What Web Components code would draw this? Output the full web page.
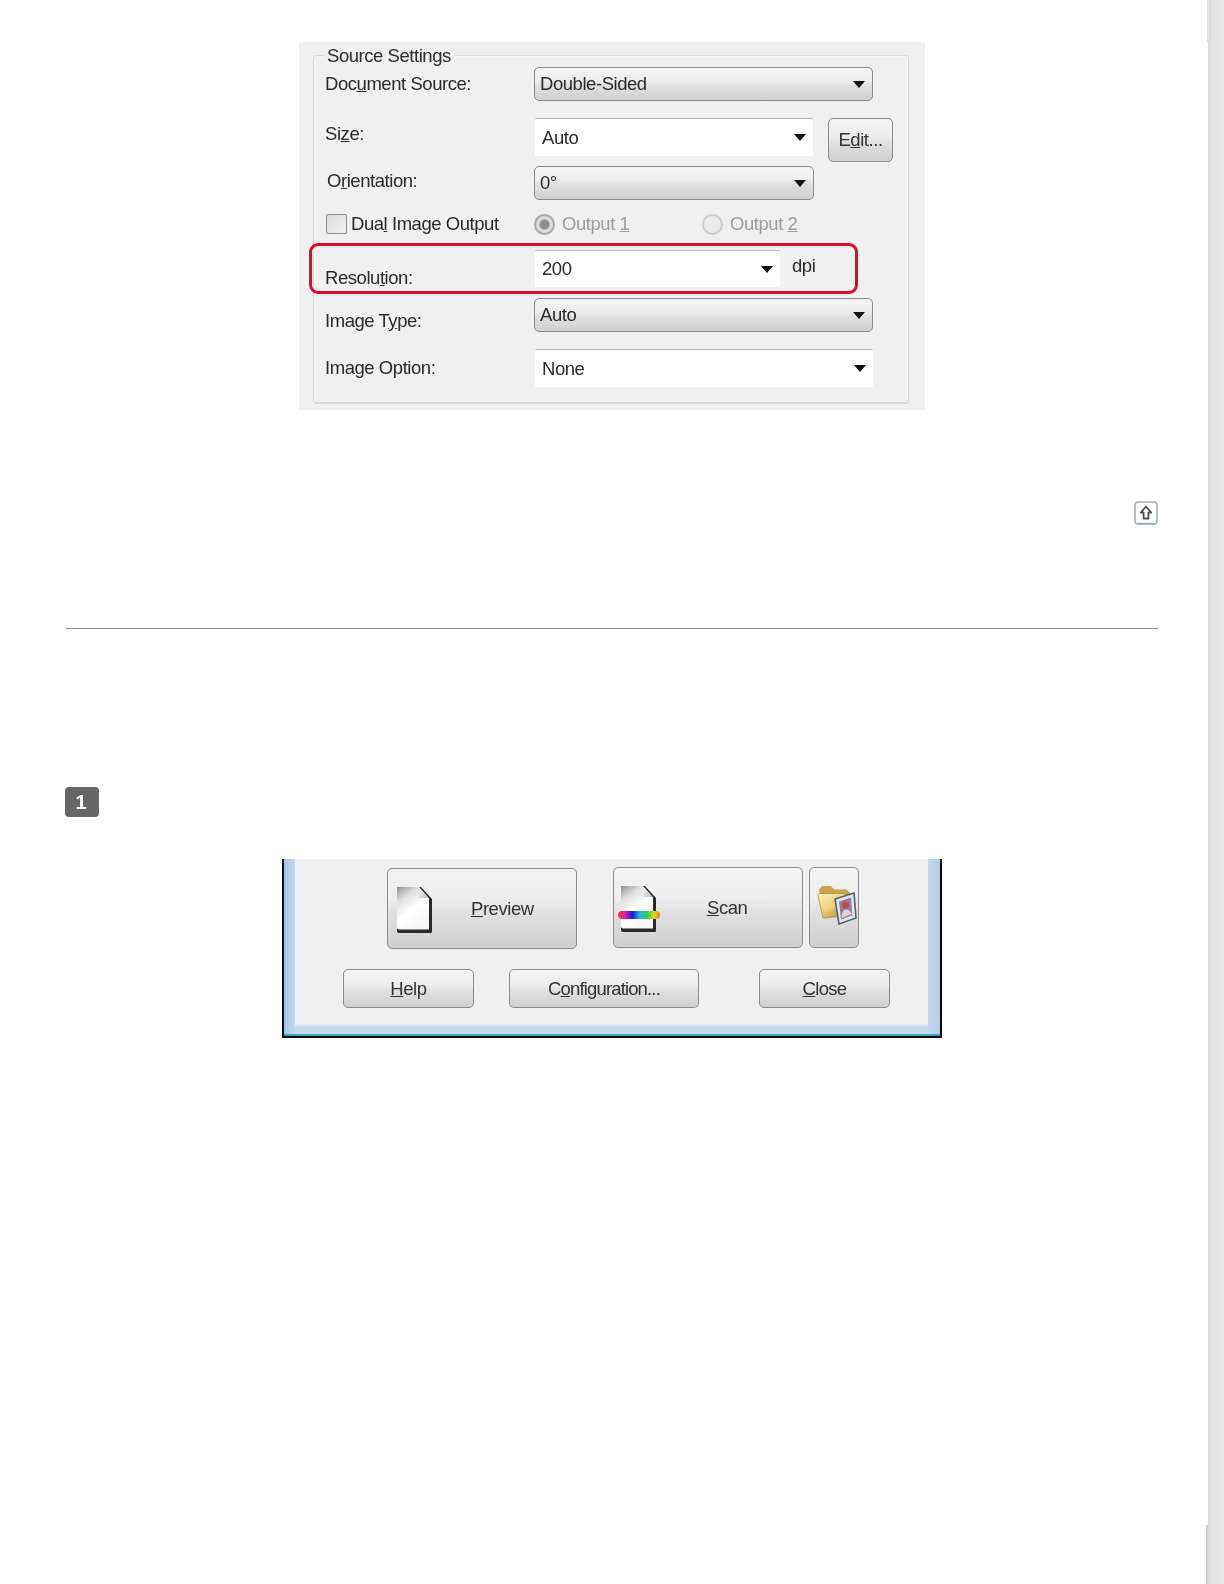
<!DOCTYPE html>
<html>
<head>
<meta charset="utf-8">
<title>Scan settings</title>
<style>
html, body { margin: 0; background: #fff; }
body { font-family: "Liberation Sans", Arial, sans-serif; color: #2a2a2a; }
u { text-underline-offset: 2px; text-decoration-thickness: 1px; }
</style>
</head>
<body>
<scan-page></scan-page>

<script>
const define = (tag, html) => {
  const template = document.createElement('template')
  template.innerHTML = html
  customElements.define(tag, class extends HTMLElement {
    constructor () {
      super()
      this.attachShadow({ mode: 'open' })
      this.shadowRoot.appendChild(template.content.cloneNode(true))
    }
  })
}

const arrow = '<svg width="12" height="7" viewBox="0 0 12 7"><path d="M0 0h12L6 7z" fill="#111"/></svg>'

const buttonFace = `
  background: linear-gradient(#f3f3f3 0, #eeeeee 38%, #e0e0e0 56%, #d0d0d0 100%);
  border: 1.5px solid #8a8a8a;
  border-radius: 5px;
  box-sizing: border-box;
`

define('ui-select', `
<style>
:host { display: flex; align-items: center; box-sizing: border-box; height: 34px; padding: 0 7px 0 5px; ${buttonFace} }
:host([edit]) { background: #fff; border: 0; border-top: 1px solid #b5b5b5; border-radius: 2px; padding: 0 7px 0 7px; }
.text { flex: 1; }
svg { display: block; flex: none; }
</style>
<span class="text"><slot></slot></span>${arrow}
`)

define('ui-button', `
<style>
:host { display: flex; align-items: center; justify-content: center; color: #333; ${buttonFace} }
</style>
<slot></slot>
`)

define('ui-check', `
<style>
:host { display: flex; align-items: center; gap: 4px; padding-left: 1px; }
i { display: block; box-sizing: border-box; width: 21px; height: 20px; border: 1.5px solid #8c8c8c; border-radius: 2px; background: linear-gradient(135deg, #d8d8d8, #f4f4f4); }
</style>
<i></i><span><slot></slot></span>
`)

define('ui-radio', `
<style>
:host { display: flex; align-items: center; gap: 7px; color: #9c9c9c; }
i { display: block; box-sizing: border-box; width: 21px; height: 21px; border: 2px solid #cdcdcd; border-radius: 50%; background: #ebebeb; }
:host([checked]) i { background: radial-gradient(circle, #8d8d8d 0 4px, #dcdcdc 6px); border-color: #a8a8a8; }
</style>
<i></i><span><slot></slot></span>
`)

define('source-settings', `
<style>
:host { display: block; box-sizing: border-box; width: 626px; height: 368px; padding: 13px 16px 6px 14px; background: #f0f0f0; filter: blur(.5px); }
.group { position: relative; box-sizing: border-box; height: 100%; padding: 11px 0 0 11px; border: 1px solid #dbdbdb; border-bottom-width: 2px; border-radius: 4px; box-shadow: inset 0 0 0 1px #f6f6f6; }
.legend { position: absolute; left: 10px; top: -12px; padding: 0 3px; background: #f0f0f0; line-height: 24px; }
.row { display: flex; align-items: center; }
.label { flex: none; width: 209px; box-sizing: border-box; }
.r2 { margin-top: 17px; height: 44px; align-items: flex-start; }
.r3 { margin-top: 4px; }
.r4 { margin-top: 14px; height: 20px; }
.r5 { margin-top: 16px; height: 37px; align-items: flex-start; }
.r6 { margin-top: 11px; }
.r7 { margin-top: 17px; }
.wide { width: 339px; }
.narrow { width: 280px; }
ui-select[edit] { height: 38px; }
.r2 ui-select { width: 278px; margin-left: 1px; }
.r5 ui-select { width: 245px; margin-left: 1px; height: 37px; }
.r7 ui-select { width: 338px; margin-left: 1px; }
.edit { width: 65px; height: 44px; margin-left: 15px; }
.dpi { margin: 5px 0 0 12px; }
.r4 ui-radio:first-of-type { width: 168px; }
.mark { position: absolute; left: -5px; top: 187px; width: 549px; height: 51px; box-sizing: border-box; border: 3px solid #e1092c; border-radius: 9px; }
</style>
<div class="group">
  <div class="legend">Source Settings</div>
  <div class="row">
    <div class="label">Doc<u>u</u>ment Source:</div>
    <ui-select class="wide">Double-Sided</ui-select>
  </div>
  <div class="row r2">
    <div class="label" style="margin-top:5px">Si<u>z</u>e:</div>
    <ui-select edit>Auto</ui-select>
    <ui-button class="edit">E<u>d</u>it...</ui-button>
  </div>
  <div class="row r3">
    <div class="label" style="padding-left:2px;margin-top:-5px">O<u>r</u>ientation:</div>
    <ui-select class="narrow">0°</ui-select>
  </div>
  <div class="row r4">
    <ui-check class="label">Dua<u>l</u> Image Output</ui-check>
    <ui-radio checked>Output <u>1</u></ui-radio>
    <ui-radio>Output <u>2</u></ui-radio>
  </div>
  <div class="row r5">
    <div class="label" style="margin-top:17px">Resolu<u>t</u>ion:</div>
    <ui-select edit>200</ui-select>
    <div class="dpi">dpi</div>
  </div>
  <div class="row r6">
    <div class="label" style="margin-top:12px">Image T<u>y</u>pe:</div>
    <ui-select class="wide">Auto</ui-select>
  </div>
  <div class="row r7">
    <div class="label">Image Option:</div>
    <ui-select edit>None</ui-select>
  </div>
  <div class="mark"></div>
</div>
`)

define('top-link', `
<style>
:host { display: block; width: 24px; height: 24px; filter: blur(.5px); }
svg { display: block; }
</style>
<svg width="24" height="24" viewBox="0 0 24 24">
  <rect x="1" y="1" width="22" height="22" rx="3" fill="#fff" stroke="#a4b0ba" stroke-width="1.6"/>
  <path d="M3 22.600h18" stroke="#8fb0cc" stroke-width="1.6"/>
  <path d="M12 5.500 6.800 11.500h2.800v6h4.800v-6h2.800z" fill="#fff" stroke="#4d4d4d" stroke-width="1.8" stroke-linejoin="round"/>
</svg>
`)

define('step-badge', `
<style>
:host { display: flex; align-items: center; justify-content: center; width: 34px; height: 30px; padding-right: 2px; box-sizing: border-box; border-radius: 4px; background: #666; color: #fff; font-size: 20px; letter-spacing: 0; font-weight: 700; filter: blur(.5px); }
</style>
<slot></slot>
`)

define('doc-icon', `
<style>
:host { display: block; width: 46px; height: 50px; flex: none; margin-top: 4px; }
svg { display: block; }
:host(:not([scan])) .band { display: none; }
</style>
<svg width="46" height="50" viewBox="0 0 46 50">
  <defs>
    <linearGradient id="paper" x1="0" y1="0" x2="0.55" y2="1">
      <stop offset="0" stop-color="#8f8f8f"/><stop offset=".28" stop-color="#dedede"/><stop offset=".6" stop-color="#fff"/><stop offset="1" stop-color="#f6f6f6"/>
    </linearGradient>
    <linearGradient id="fold" x1="0" y1="0" x2="1" y2="1">
      <stop offset="0" stop-color="#fafafa"/><stop offset="1" stop-color="#bdbdbd"/>
    </linearGradient>
    <linearGradient id="rainbow">
      <stop offset="0" stop-color="#f04040"/><stop offset=".16" stop-color="#e020b0"/><stop offset=".34" stop-color="#1c20c8"/><stop offset=".52" stop-color="#20b8ea"/><stop offset=".7" stop-color="#30d040"/><stop offset=".86" stop-color="#dede20"/><stop offset="1" stop-color="#f07020"/>
    </linearGradient>
  </defs>
  <path d="M4 1h24l11 12v32.500a1.500 1.500 0 0 1-1.500 1.500H6a2 2 0 0 1-2-2z" fill="#2a2a2a"/>
  <path d="M4 1h22v11h10v31.500H6a2 2 0 0 1-2-2z" fill="url(#paper)"/>
  <path d="M26 1l10 11H26z" fill="url(#fold)"/>
  <rect class="band" x="1" y="26" width="42" height="8" rx="4" fill="url(#rainbow)"/>
</svg>
`)

define('folder-icon', `
<style>
:host { display: block; width: 40px; height: 42px; flex: none; margin: -6px 0 0 5px; }
svg { display: block; }
</style>
<svg width="40" height="42" viewBox="0 0 40 42">
  <defs>
    <linearGradient id="folder" x1="0" y1="0" x2="0.7" y2="1">
      <stop offset="0" stop-color="#fdf2bc"/><stop offset=".55" stop-color="#efd27a"/><stop offset="1" stop-color="#b8923a"/>
    </linearGradient>
  </defs>
  <path d="M2 5.500 5 2h9l3 3.500h13l4 5v14L8 32z" fill="#c8a44a"/>
  <path d="M1 11.500Q1 9.500 3 9.500h24l5 4-4 18-19 2.500H6z" fill="url(#folder)" stroke="#ad8d3c" stroke-width=".8"/>
  <path d="M18 15 37 9l2 25-17 6z" fill="#dfe7ec" stroke="#4f6270" stroke-width="1.600"/>
  <path d="M22 17.500l12-4 1.400 18L24 35.500z" fill="#8d7fa8"/>
  <circle cx="28.500" cy="21" r="3.600" fill="#c04a4a"/>
  <path d="M24.500 34c0-6 2.500-8.500 4.500-8.500s4.500 1.500 6 4.500z" fill="#e6d4ce"/>
</svg>
`)

define('scan-bar', `
<style>
:host { display: block; box-sizing: border-box; width: 660px; height: 179px; border: 2px solid #0b0b0b; border-top: 0; filter: blur(.5px); }
.frame { box-sizing: border-box; height: 100%; padding: 0 12px 10px 11px; border-bottom: 2px solid #3ba7b8; background: linear-gradient(90deg, #a9c6e6, #c4d8ee 11px, #c4d8ee calc(100% - 11px), #b4cde8); }
.inner { box-sizing: border-box; height: 100%; padding: 8px 0 0 0; background: #f0f0f0; box-shadow: 0 2px 0 #dfe9f4; }
.row { display: flex; }
.r1 { height: 82px; padding-left: 92px; }
.r2 { height: 39px; padding-left: 48px; margin-top: 20px; }
.big { width: 190px; height: 81px; justify-content: flex-start; padding-left: 5px; }
.big span { margin-top: 1px; }
.preview { margin-top: 1px; gap: 32px; }
.scan { margin-left: 36px; gap: 44px; padding-left: 3px; }
.folder { width: 50px; height: 81px; margin-left: 6px; }
.help { width: 131px; }
.config { width: 190px; margin-left: 35px; letter-spacing: -.85px; }
.close { width: 131px; margin-left: 60px; letter-spacing: -.7px; }
</style>
<div class="frame">
  <div class="inner">
    <div class="row r1">
      <ui-button class="big preview"><doc-icon></doc-icon><span><u>P</u>review</span></ui-button>
      <ui-button class="big scan"><doc-icon scan></doc-icon><span><u>S</u>can</span></ui-button>
      <ui-button class="folder"><folder-icon></folder-icon></ui-button>
    </div>
    <div class="row r2">
      <ui-button class="help"><span><u>H</u>elp</span></ui-button>
      <ui-button class="config"><span>C<u>o</u>nfiguration...</span></ui-button>
      <ui-button class="close"><span><u>C</u>lose</span></ui-button>
    </div>
  </div>
</div>
`)

define('scroll-rail', `
<style>
:host { display: flex; flex-direction: column; flex: none; width: 18px; height: 100%; background: linear-gradient(90deg, #fff 0 2px, #d9d9d9 2px, #e3e3e3 6px, #e8e8e8 100%); }
.top { height: 42px; margin-left: 1px; border-left: 2px solid #e4e4e4; }
.mid { flex: 1; }
.end { height: 59px; border-left: 2px solid #cfcfcf; }
</style>
<div class="top"></div><div class="mid"></div><div class="end"></div>
`)

define('scan-page', `
<style>
:host { display: flex; width: 1224px; height: 1584px; overflow: hidden; font-family: "Liberation Sans", Arial, sans-serif; font-size: 18.5px; letter-spacing: -.45px; color: #2a2a2a; }
main { flex: 1; display: flex; flex-direction: column; box-sizing: border-box; padding: 42px 48px 0 66px; }
source-settings, scan-bar { align-self: center; }
top-link { align-self: flex-end; margin-top: 91px; }
hr { width: 100%; height: 1px; margin: 103px 0 0; border: 0; background: #8f8f8f; }
step-badge { margin-top: 158px; margin-left: -1px; }
scan-bar { margin-top: 42px; }
</style>
<main>
  <source-settings></source-settings>
  <top-link></top-link>
  <hr>
  <step-badge>1</step-badge>
  <scan-bar></scan-bar>
</main>
<scroll-rail></scroll-rail>
`)
</script>
</body>
</html>
